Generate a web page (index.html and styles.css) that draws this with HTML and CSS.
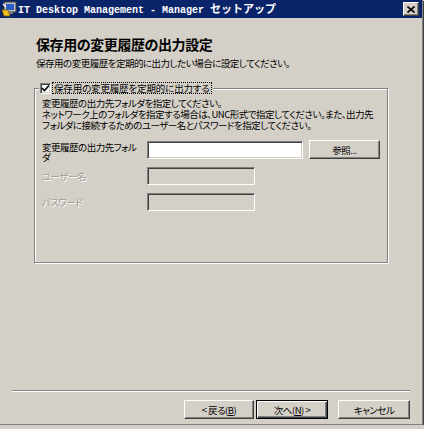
FILE: index.html
```html
<!DOCTYPE html>
<html lang="ja">
<head>
<meta charset="utf-8">
<title>IT Desktop Management - Manager セットアップ</title>
<link rel="stylesheet" href="styles.css">
</head>
<body>
<div class="window">
  <div class="titlebar">
    <svg class="title-icon" width="16" height="16" viewBox="0 0 16 16">
      <rect x="3" y="1" width="12" height="10" fill="#c0c0c0" stroke="#404040" stroke-width="1"/>
      <rect x="5" y="3" width="8" height="6" fill="#2a5cc8"/>
      <rect x="6" y="11" width="6" height="2" fill="#808080"/>
      <path d="M1 9 L7 9 L9 15 L3 15 Z" fill="#f0c020" stroke="#806000" stroke-width="0.8"/>
      <path d="M2 3 L5 6" stroke="#fff" stroke-width="1.2"/>
    </svg>
    <div class="title"><span class="lat">IT Desktop Management - Manager </span><span class="ja">セットアップ</span></div>
    <div class="close">
      <svg width="8" height="7" viewBox="0 0 8 7"><path d="M0.5 0.5 L7.5 6.5 M7.5 0.5 L0.5 6.5" stroke="#000" stroke-width="1.6"/></svg>
    </div>
  </div>

  <div class="header">
    <h1 class="heading">保存用の変更履歴の出力設定</h1>
    <p class="subtitle">保存用の変更履歴を定期的に出力したい場合に設定してください。</p>
  </div>

  <fieldset class="group">
    <legend class="legend">
      <span class="checkbox">
        <svg width="9" height="9" viewBox="0 0 9 9"><path d="M1 4 L3.5 6.5 L8 1.5" fill="none" stroke="#000" stroke-width="1.6"/></svg>
      </span>
      <span class="legend-text">保存用の変更履歴を定期的に出力する</span>
    </legend>
    <p class="desc">変更履歴の出力先フォルダを指定してください。<br>ネットワーク上のフォルダを指定する場合は、UNC形式で指定してください。また、出力先<br>フォルダに接続するためのユーザー名とパスワードを指定してください。</p>
    <div class="form">
      <div class="label label-folder">変更履歴の出力先フォル<br>ダ</div>
      <div class="field field-folder"></div>
      <div class="btn btn-browse">参照...</div>

      <div class="label disabled">ユーザー名</div>
      <div class="field field-short off"></div>
      <div></div>

      <div class="label disabled">パスワード</div>
      <div class="field field-short off"></div>
      <div></div>
    </div>
  </fieldset>

  <div class="footer">
    <div class="separator"></div>
    <div class="buttons">
      <div class="btn btn-back">&lt; 戻る(<u>B</u>)</div>
      <div class="btn btn-default">次へ(<u>N</u>) &gt;</div>
      <div class="btn btn-cancel">キャンセル</div>
    </div>
  </div>
</div>
</body>
</html>
```
FILE: styles.css
```css
* { box-sizing: border-box; }
html, body { margin: 0; padding: 0; }
body {
  background: #d4d0c8;
  font-family: "Noto Sans CJK JP", "Noto Sans", sans-serif;
  font-size: 9.5px;
  letter-spacing: -0.5px;
  font-feature-settings: "palt";
  color: #000;
}
.window {
  width: 423px;
  height: 425px;
  background: #d4d0c8;
  border-right: 1px solid #808080;
  border-bottom: 1px solid #808080;
  box-shadow: 1px 1px 0 #404040;
  display: flex;
  flex-direction: column;
}
.titlebar {
  height: 18px;
  background: #0a246a;
  display: flex;
  align-items: center;
  padding: 0 3px 0 1px;
  color: #fff;
  font-weight: bold;
  letter-spacing: 0;
  flex: none;
}
.title-icon { flex: none; margin-right: 1px; }
.title { flex: 1; white-space: nowrap; line-height: 18px; }
.title .lat { font-family: "Liberation Mono", monospace; font-size: 10px; }
.title .ja { font-size: 11px; font-feature-settings: normal; }
.close {
  width: 16px;
  height: 14px;
  background: #d4d0c8;
  border: 1px solid;
  border-color: #fff #404040 #404040 #fff;
  box-shadow: inset -1px -1px 0 #808080;
  display: flex;
  align-items: center;
  justify-content: center;
}
.header { padding: 18px 0 0 36px; flex: none; }
.heading {
  margin: 0;
  font-size: 14px;
  line-height: 16px;
  letter-spacing: -0.4px;
  font-weight: bold;
}
.subtitle {
  margin: 5px 0 0;
  line-height: 12px;
}
.group {
  margin: 13px 0 0 34px;
  width: 354px;
  height: 181px;
  padding: 0 7px;
  border: 1px solid #808080;
  box-shadow: inset 1px 1px 0 #fff, 1px 1px 0 #fff;
  min-width: 0;
  flex: none;
}
.legend {
  padding: 0 1px;
  margin-left: -3px;
  height: 12px;
  line-height: 12px;
  display: flex;
  align-items: center;
  background: #d4d0c8;
}
.checkbox {
  width: 11px;
  height: 11px;
  background: #fff;
  border: 1px solid;
  border-color: #808080 #fff #fff #808080;
  box-shadow: inset 1px 1px 0 #404040, inset -1px -1px 0 #d4d0c8;
  display: flex;
  align-items: center;
  justify-content: center;
}
.legend-text {
  margin-left: 1px;
  border: 1px dotted #000;
  padding: 0 1px;
  line-height: 10px;
  letter-spacing: -0.15px;
}
.desc {
  margin: 4px 0 0;
  line-height: 11px;
  white-space: nowrap;
}
.form {
  margin-top: 9px;
  display: grid;
  grid-template-columns: 99px 156px 71px;
  grid-template-rows: 19px 18px 18px;
  column-gap: 6px;
  row-gap: 8px;
}
.label { display: flex; align-items: center; white-space: nowrap; }
.label-folder {
  display: block;
  padding-top: 2px;
  line-height: 10px;
}
.disabled { color: #a09d94; text-shadow: 1px 1px 0 #fff; }
.field {
  height: 18px;
  background: #fff;
  border: 1px solid;
  border-color: #808080 #fff #fff #808080;
  box-shadow: inset 1px 1px 0 #404040, inset -1px -1px 0 #d4d0c8;
}
.field-folder { margin-top: 1px; }
.field-short { width: 108px; }
.off { background: #d4d0c8; }
.btn {
  height: 19px;
  background: #d4d0c8;
  border: 1px solid;
  border-color: #fff #404040 #404040 #fff;
  box-shadow: inset -1px -1px 0 #808080;
  display: flex;
  align-items: center;
  justify-content: center;
  white-space: nowrap;
}
.btn-browse { width: 71px; }
.footer { margin-top: auto; padding: 0 12px 5px; flex: none; }
.separator {
  height: 2px;
  border-top: 1px solid #808080;
  border-bottom: 1px solid #fff;
}
.buttons {
  margin-top: 8px;
  display: flex;
  justify-content: flex-end;
}
.btn-back { width: 70px; }
.btn-default {
  width: 72px;
  margin-left: 2px;
  border: 1px solid #000;
  box-shadow: inset 1px 1px 0 #fff, inset -1px -1px 0 #404040, inset -2px -2px 0 #808080;
}
.btn-cancel { width: 72px; margin-left: 10px; }
u { text-decoration: underline; }
```
